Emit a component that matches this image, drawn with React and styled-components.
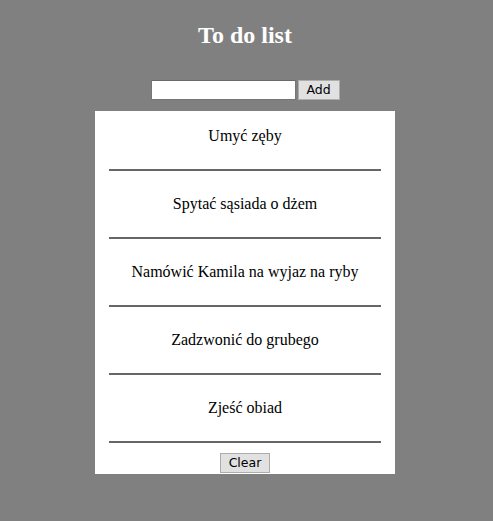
import React, { useState } from "react";
import styled, { createGlobalStyle } from "styled-components";

const GlobalStyle = createGlobalStyle`
  html, body {
    margin: 0;
    padding: 0;
    background: #808080;
  }
  body {
    font-family: "Liberation Serif", "Times New Roman", serif;
  }
`;

function App() {
  const [tasks, setTasks] = useState([
    "Umyć zęby",
    "Spytać sąsiada o dżem",
    "Namówić Kamila na wyjaz na ryby",
    "Zadzwonić do grubego",
    "Zjeść obiad",
  ]);
  const [text, setText] = useState("");

  const addTask = () => {
    if (text.trim() === "") return;
    setTasks([...tasks, text]);
    setText("");
  };

  return (
    <Page>
      <GlobalStyle />
      <Heading>To do list</Heading>
      <Form>
        <TaskInput value={text} onChange={(e) => setText(e.target.value)} />
        <Button $width={42} onClick={addTask}>
          Add
        </Button>
      </Form>
      <Panel>
        <List>
          {tasks.map((task, i) => (
            <Item key={i}>
              <ItemText>{task}</ItemText>
              <Rule />
            </Item>
          ))}
        </List>
        <Button $width={50} onClick={() => setTasks([])}>
          Clear
        </Button>
      </Panel>
    </Page>
  );
}

export default App;

const Page = styled.div`
  display: flex;
  flex-direction: column;
  align-items: center;
  min-height: 521px;
  padding-right: 3px;
  background: #808080;
`;
const Heading = styled.h2`
  margin: 21px 0 0;
  height: 29px;
  line-height: 29px;
  font-size: 24px;
  font-weight: bold;
  color: #fff;
`;
const Form = styled.div`
  display: flex;
  align-items: center;
  gap: 2px;
  margin-top: 30px;
  height: 20px;
`;
const TaskInput = styled.input`
  box-sizing: border-box;
  width: 145px;
  height: 20px;
  border: 1px solid #767676;
  border-top-color: #6a6a6a;
  background: #fff;
  padding: 1px 2px;
  font-size: 13px;
  outline: none;
`;
const Button = styled.button`
  box-sizing: border-box;
  width: ${(p) => p.$width}px;
  height: 20px;
  padding: 0;
  border: 1px solid #adadad;
  background: #e1e1e1;
  color: #000;
  font-family: "DejaVu Sans", "Liberation Sans", sans-serif;
  font-size: 12.5px;
  line-height: 18px;
  cursor: pointer;
`;
const Panel = styled.div`
  box-sizing: border-box;
  width: 300px;
  margin-top: 11px;
  padding: 0 14px 1px;
  background: #fff;
  display: flex;
  flex-direction: column;
  align-items: center;
`;
const List = styled.ul`
  list-style: none;
  margin: 0;
  padding: 0;
  width: 100%;
  margin-bottom: 10px;
`;
const Item = styled.li`
  display: flex;
  flex-direction: column;
  padding-top: 16px;
  &:not(:first-child) {
    padding-top: 24px;
  }
`;
const ItemText = styled.span`
  display: block;
  height: 18px;
  line-height: 18px;
  font-size: 16px;
  text-align: center;
  color: #000;
`;
const Rule = styled.div`
  margin-top: 24px;
  height: 2px;
  background: #666;
`;
